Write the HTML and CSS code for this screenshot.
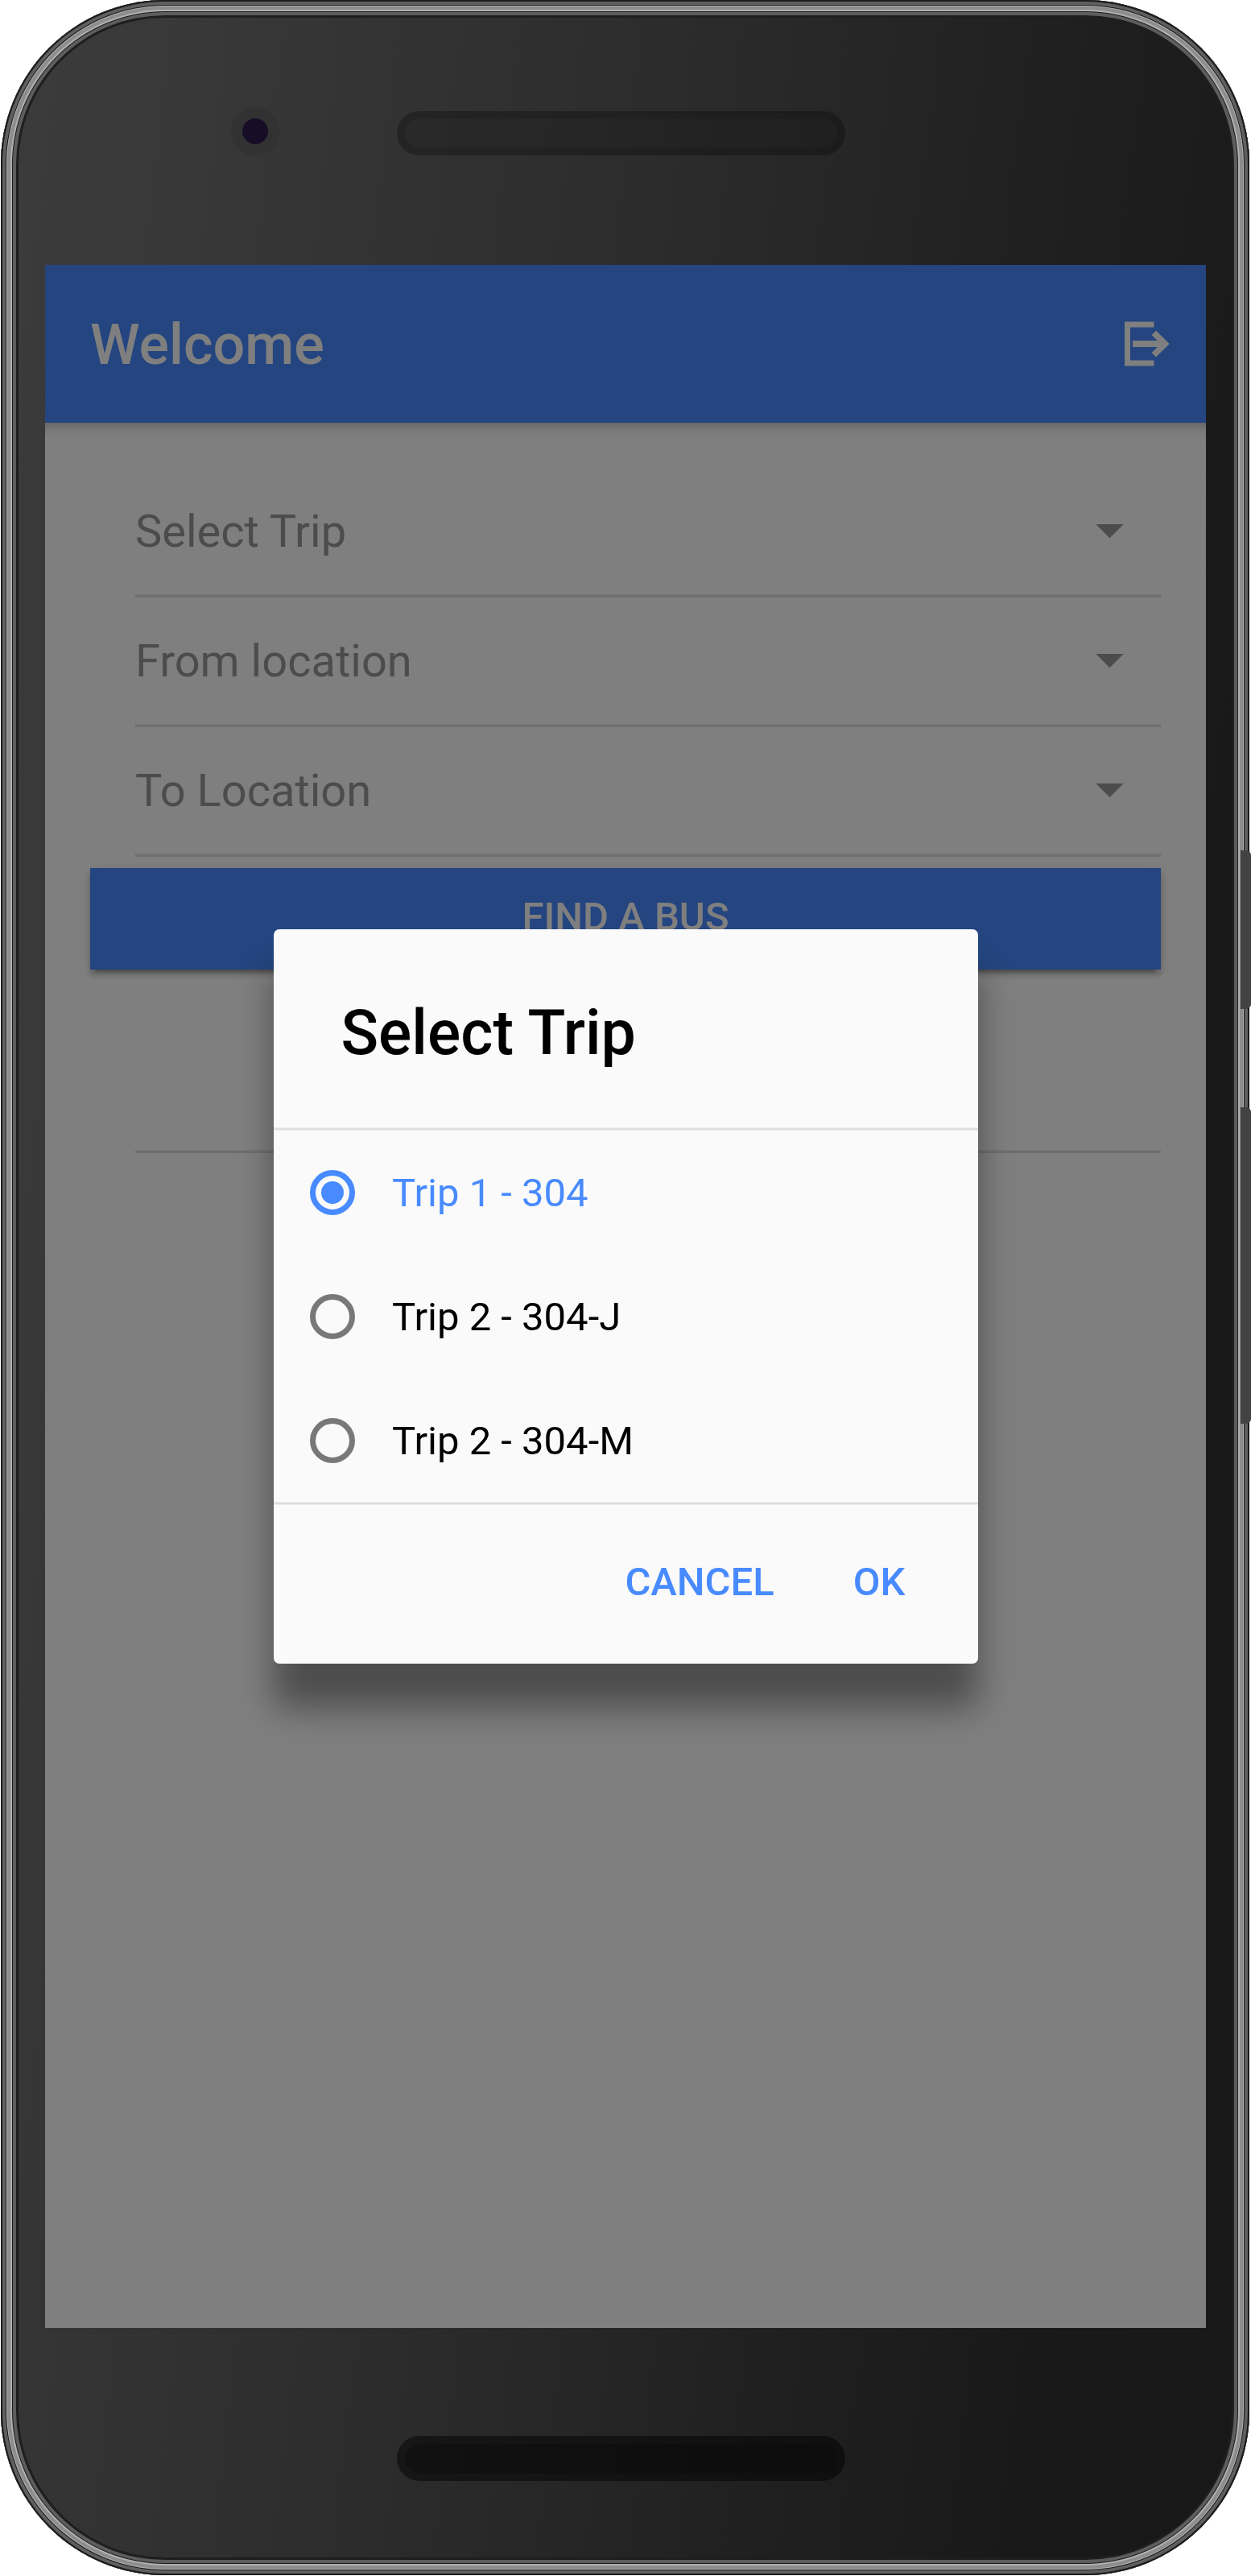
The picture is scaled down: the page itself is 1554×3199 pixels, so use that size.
FILE: index.html
```html
<!DOCTYPE html>
<html lang="en">
<head>
<meta charset="utf-8">
<title>Welcome</title>
<link rel="stylesheet" href="styles.css">
</head>
<body>
<div class="phone">
  <span class="side-key side-key-power"></span>
  <span class="side-key side-key-volume"></span>
  <div class="bezel-top">
    <span class="camera"></span>
    <span class="speaker"></span>
  </div>
  <div class="screen">
    <header class="toolbar">
      <h1 class="toolbar-title">Welcome</h1>
      <svg class="logout" viewBox="0 0 56 56" fill="none" stroke="#fff">
        <path d="M36.5 4H3.5v48h33" stroke-width="7"/>
        <path d="M10 28h38" stroke-width="8"/>
        <path d="M36.3 14.2L50.3 28l-14 13.8" stroke-width="7.6"/>
      </svg>
    </header>
    <main class="content">
      <div class="item"><span>Select Trip</span><i class="caret"></i></div>
      <div class="item"><span>From location</span><i class="caret"></i></div>
      <div class="item"><span>To Location</span><i class="caret"></i></div>
      <button class="find">FIND A BUS</button>
      <div class="item item-empty"></div>
    </main>
    <div class="backdrop">
      <section class="alert">
        <h2 class="alert-title">Select Trip</h2>
        <div class="options">
          <label class="option option-checked"><i class="radio"></i><span>Trip 1 - 304</span></label>
          <label class="option"><i class="radio"></i><span>Trip 2 - 304-J</span></label>
          <label class="option"><i class="radio"></i><span>Trip 2 - 304-M</span></label>
        </div>
        <div class="actions">
          <button class="action">CANCEL</button>
          <button class="action">OK</button>
        </div>
      </section>
    </div>
  </div>
  <div class="bezel-bottom">
    <span class="speaker speaker-bottom"></span>
  </div>
</div>
</body>
</html>
```
FILE: styles.css
```css
* { box-sizing: border-box; }

body {
  margin: 0;
  background: #fff;
  font-family: Roboto, "Liberation Sans", sans-serif;
  overflow: hidden;
}

h1, h2 { margin: 0; font-weight: 500; }

button {
  border: 0;
  padding: 0;
  background: none;
  font: 500 49px/57px Roboto, "Liberation Sans", sans-serif;
}

/* Phone body and its metal rim */
.phone {
  position: relative;
  display: flex;
  flex-direction: column;
  width: 1551px;
  height: 3198px;
  margin-left: 1px;
  padding: 0 54px 0 55px;
  border-radius: 204px;
  background: linear-gradient(97deg, #3b3b3b 0, #393939 200px, #333 480px, #2d2d2d 780px, #262626 1075px, #202020 1300px, #1c1c1c 1500px, #191919 1620px, #181818 100%);
  box-shadow:
    inset 0 0 0 2px #1c1c1c,
    inset 0 0 0 6px #5f5f5f,
    inset 0 0 0 7px #1c1c1c,
    inset 0 0 0 8px #b0b0b0,
    inset 0 0 0 12px #8d8d8d,
    inset 0 0 0 14px #b0b0b0,
    inset 0 0 0 15px #1c1c1c,
    inset 0 0 0 19px #5c5e5c,
    inset 0 0 0 22px #1e1e1e;
}

.side-key {
  position: absolute;
  left: 1540px;
  width: 13px;
  border-radius: 0 6px 6px 0;
  background: #434343;
}
.side-key-power { top: 1056px; height: 197px; }
.side-key-volume { top: 1375px; height: 393px; }

.bezel-top {
  display: flex;
  align-items: flex-start;
  height: 329px;
  padding: 133px 0 0 231px;
}

.camera {
  width: 60px;
  height: 60px;
  margin-right: 146px;
  border: 14px solid #323232;
  border-radius: 50%;
  background: #170d26;
}

.speaker {
  width: 557px;
  height: 55px;
  margin-top: 5px;
  border: 10px solid rgba(0, 0, 0, .12);
  border-radius: 28px;
  background: rgba(0, 0, 0, .17);
}

.bezel-bottom {
  display: flex;
  align-items: flex-start;
  padding: 134px 0 0 437px;
}
.speaker-bottom {
  height: 56px;
  margin-top: 0;
  border-color: transparent;
  background:
    linear-gradient(rgba(0, 0, 0, .22), rgba(0, 0, 0, .22)) padding-box,
    linear-gradient(rgba(0, 0, 0, .48), rgba(0, 0, 0, .48)) border-box;
}

/* App screen */
.screen {
  position: relative;
  height: 2562px;
  background: #fff;
}

.toolbar {
  position: relative;
  display: flex;
  align-items: center;
  justify-content: space-between;
  height: 196px;
  padding: 0 45px 0 56px;
  background: #488aff;
  color: #fff;
}
.toolbar::after {
  content: "";
  position: absolute;
  top: 100%;
  left: 0;
  right: 0;
  height: 18px;
  background: linear-gradient(#d2d2d2, #f0f0f0 50%, #fff);
}
.toolbar-title { padding-top: 2px; font-size: 70px; line-height: 82px; }
.logout { width: 56px; height: 56px; }

.content {
  display: flex;
  flex-direction: column;
  padding: 56px;
}

.item {
  display: flex;
  align-items: center;
  justify-content: space-between;
  height: 161px;
  margin-left: 56px;
  padding: 0 46px 4px 0;
  background: linear-gradient(#eee 1px, #dedede 1px) bottom / 100% 4px no-repeat;
  color: #999;
  font-size: 56px;
}
.item-empty { margin-top: 67px; }

.caret {
  width: 35px;
  height: 17.5px;
  background: #999;
  clip-path: polygon(0 0, 100% 0, 50% 100%);
}

.find {
  height: 126px;
  margin-top: 14px;
  padding-bottom: 5px;
  background: #488aff;
  color: #fff;
  box-shadow: 0 7px 6px rgba(0, 0, 0, .16), 0 10px 3px -7px rgba(0, 0, 0, .2), 0 3px 12px rgba(0, 0, 0, .16);
}

/* Trip picker dialog */
.backdrop {
  position: absolute;
  inset: 0;
  display: flex;
  align-items: center;
  justify-content: center;
  background: rgba(0, 0, 0, .5);
}

.alert {
  width: 875px;
  border-radius: 7px;
  background: #fafafa;
  box-shadow: 0 55px 44px rgba(0, 0, 0, .4);
}
.alert-title {
  height: 246px;
  padding: 84px 84px 0;
  font-size: 77px;
  line-height: 90px;
}

.options {
  padding: 3.5px 0;
  background:
    linear-gradient(#ebebeb 1px, #dedede 1px 3px, #ebebeb 3px) top / 100% 4px no-repeat,
    linear-gradient(#ebebeb 1px, #dedede 1px 3px, #ebebeb 3px) bottom / 100% 4px no-repeat;
}
.option {
  display: flex;
  align-items: center;
  gap: 46px;
  height: 154px;
  padding-left: 45.5px;
  font-size: 49px;
}
.option span { padding-top: 1px; }
.option-checked { color: #488aff; }

.radio {
  width: 56px;
  height: 56px;
  border: 7px solid #787878;
  border-radius: 50%;
}
.option-checked .radio {
  padding: 7px;
  border-color: #488aff;
  background: #488aff content-box;
}

.actions {
  display: flex;
  justify-content: flex-end;
  gap: 98px;
  height: 196.5px;
  padding: 0 90px 6px 0;
}
.action { color: #488aff; }
```
